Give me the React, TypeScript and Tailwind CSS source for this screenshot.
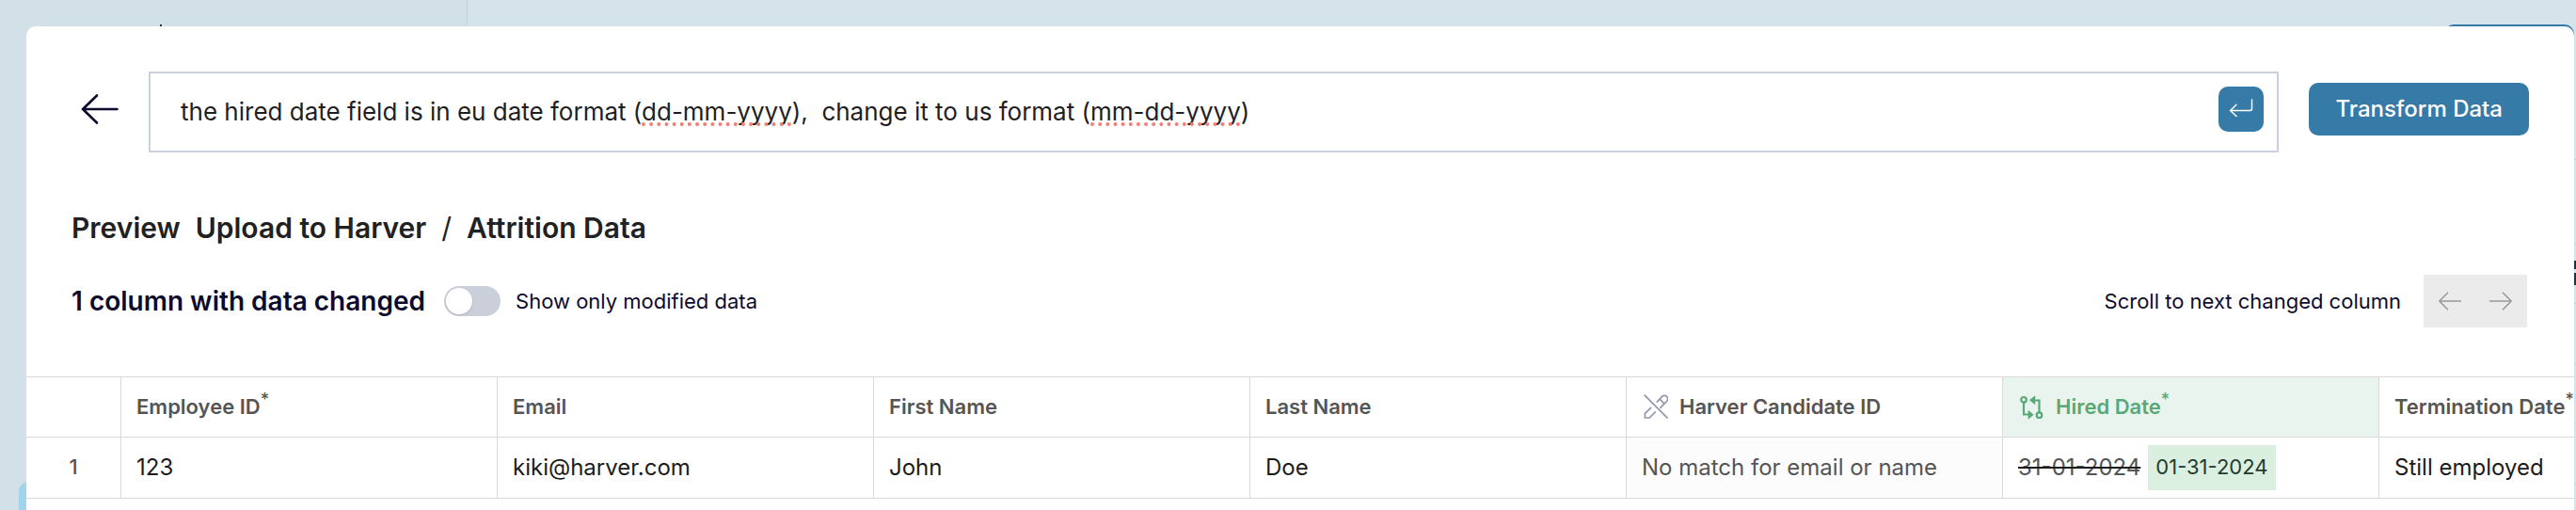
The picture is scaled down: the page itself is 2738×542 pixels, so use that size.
import type { ReactNode } from "react";

const columns: {
  title: string;
  required?: boolean;
  icon?: ReactNode;
  highlight?: boolean;
}[] = [
  { title: "Employee ID", required: true },
  { title: "Email" },
  { title: "First Name" },
  { title: "Last Name" },
  { title: "Harver Candidate ID", icon: <PencilOffIcon /> },
  { title: "Hired Date", required: true, icon: <CompareIcon />, highlight: true },
  { title: "Termination Date", required: true },
];

const prompt =
  "the hired date field is in eu date format (dd-mm-yyyy),\u00a0 change it to us format (mm-dd-yyyy)";

function PencilOffIcon() {
  return (
    <svg className="size-[26px] text-[#9398ac]" viewBox="0 0 26 26" fill="none" stroke="currentColor" strokeWidth="1.7">
      <path d="M0.7 0.7L25.5 25.5" />
      <path d="M13.8 8.6L19.6 2.4a3.5 3.5 0 0 1 5 5L17.4 14.8" />
      <path d="M17.2 5.2l4.6 4.6" />
      <path d="M8.2 13.8L1.4 20.4V25H6.2L12.8 18.4" />
    </svg>
  );
}

function CompareIcon() {
  return (
    <svg className="size-[26px]" viewBox="0 0 26 26" fill="none" stroke="currentColor" strokeWidth="2.2">
      <circle cx="4" cy="4.8" r="2.8" />
      <path d="M4 7.8V20.5h5" />
      <path d="M8.6 15.8v10l6-5z" fill="currentColor" stroke="none" />
      <circle cx="20.5" cy="21.2" r="2.8" />
      <path d="M20.5 18V5.5h-5" />
      <path d="M16.2 0.2v10l-6.2-5z" fill="currentColor" stroke="none" />
    </svg>
  );
}

function ArrowIcon({ right = false }: { right?: boolean }) {
  return (
    <svg className="h-5 w-6" viewBox="0 0 24 20" fill="none" stroke="currentColor" strokeWidth="1.6">
      {right ? (
        <path d="M0 10h23M14 0.8L23.2 10L14 19.2" />
      ) : (
        <path d="M24 10H1M10 0.8L0.8 10L10 19.2" />
      )}
    </svg>
  );
}

/* Upload page that stays visible around the edges of the modal */
function Backdrop() {
  return (
    <div className="absolute inset-0 flex overflow-hidden bg-[#d5e3ea]" aria-hidden="true">
      <div className="relative w-[497px] shrink-0 border-r border-[#c3d2dc] bg-[#d2e1e8]">
        <div className="absolute left-[170px] top-[26px] h-2 w-0.5 bg-[#22333b]" />
        <div className="absolute left-5 top-[512px] h-16 w-40 rounded-[10px] bg-[#a0d4ec]" />
      </div>
      <div className="relative flex-1">
        <div className="absolute right-0.5 top-[26px] h-14 w-[138px] rounded-[10px] bg-[#367ba7]" />
        <div className="pt-[169px]">
          <div className="h-[26px] border-t border-[#c3d2dc]" />
          {[0, 1, 2, 3, 4, 5].map((row) => (
            <div key={row} className="h-16 border-b border-[#c3d2dc]" />
          ))}
        </div>
        <div className="absolute right-0 top-[277px] h-[9px] w-1 bg-[#22333b]" />
        <div className="absolute right-0 top-[290px] h-[13px] w-1 bg-[#22333b]" />
      </div>
    </div>
  );
}

function PromptField() {
  return (
    <div className="relative h-[86px] flex-1">
      <input
        type="text"
        aria-label="Transformation prompt"
        defaultValue={prompt}
        spellCheck={false}
        className="h-full w-full border-2 border-[#cbd0de] bg-white pb-0.5 pl-8 pr-20 text-[26px] text-[#1f1f1f] outline-none"
      />
      {/* spelling marks */}
      <div
        aria-hidden="true"
        className="pointer-events-none absolute inset-0 flex items-center overflow-hidden whitespace-pre border-2 border-transparent pb-0.5 pl-8 pr-20 text-[26px] text-transparent"
      >
        <span>
          {prompt.split(/(dd-mm-yyyy|mm-dd-yyyy)/).map((part, i) =>
            i % 2 ? (
              <span
                key={i}
                className="underline decoration-[#f47c70] decoration-dotted decoration-4 underline-offset-3 [text-decoration-skip-ink:none]"
              >
                {part}
              </span>
            ) : (
              part
            )
          )}
        </span>
      </div>
      <button
        type="button"
        aria-label="Submit prompt"
        className="absolute right-4 top-4 size-12 rounded-[10px] bg-[#367ba7] text-white"
      >
        <svg className="size-12" viewBox="0 0 48 48" fill="none" stroke="currentColor" strokeWidth="1.5" strokeLinecap="round">
          <path d="M35.5 14v9.5q0 2-2 2H12.8M19 19.2l-6.4 6.3L19 31.5" />
        </svg>
      </button>
    </div>
  );
}

export default function App() {
  return (
    <div className="relative flex min-h-screen flex-col overflow-hidden pl-7 pr-0.5 pt-7 font-[Inter,sans-serif]">
      <Backdrop />

      <main className="relative flex-1 overflow-hidden rounded-t-[10px] bg-white pt-12">
        <div className="flex items-center gap-8 px-12">
          <button type="button" aria-label="Back" className="mb-1.5 pl-2.5 text-[#0d0b2d]">
            <svg className="h-8 w-10" viewBox="0 0 40 32" fill="none" stroke="currentColor" strokeWidth="2.6" strokeLinecap="round" strokeLinejoin="round">
              <path d="M38.5 16H2M17 1.5L2 16L17 30.5" />
            </svg>
          </button>
          <PromptField />
          <button
            type="button"
            className="mb-1.5 h-14 rounded-[10px] bg-[#367ba7] px-7 text-2xl font-medium text-white"
          >
            Transform Data
          </button>
        </div>

        <h1 className="mt-[62px] flex gap-4 px-12 text-[30px] leading-9 font-semibold text-[#212121]">
          <span>Preview</span>
          <span>Upload to Harver</span>
          <span className="font-normal">/</span>
          <span>Attrition Data</span>
        </h1>

        <div className="mt-8 flex h-14 items-center px-12 text-[22px] text-[#0d0b2d]">
          <h2 className="text-[28px] font-semibold">1 column with data changed</h2>
          <label className="ml-5 flex items-center gap-4">
            <input
              type="checkbox"
              role="switch"
              className="flex h-8 w-15 appearance-none items-center rounded-full bg-[#cbcfda] px-0.5 before:size-7 before:rounded-full before:bg-white before:shadow-sm checked:justify-end checked:bg-[#367ba7]"
            />
            Show only modified data
          </label>
          <div className="ml-auto mr-0.5 flex items-center gap-6">
            <span>Scroll to next changed column</span>
            <div className="flex h-14 gap-[30px] bg-[#ebebeb] px-4 text-[#999999]">
              <button type="button" aria-label="Previous changed column">
                <ArrowIcon />
              </button>
              <button type="button" aria-label="Next changed column">
                <ArrowIcon right />
              </button>
            </div>
          </div>
        </div>

        <div className="mt-13 overflow-hidden">
          <table className="w-max border-separate border-spacing-0 text-left text-2xl text-[#1c1c1c] [&_td]:h-[65px] [&_td]:border-b [&_td]:border-[#d9d9d9] [&_td+td]:border-l [&_td+td]:px-4">
            <thead>
              <tr className="text-[22px] text-[#555555]">
                <td className="w-[100px] min-w-[100px] border-t" />
                {columns.map((col) => (
                  <th
                    key={col.title}
                    scope="col"
                    className={`h-[65px] w-[400px] min-w-[400px] border-y border-l border-[#d9d9d9] px-4 font-semibold ${
                      col.highlight ? "bg-[#eaf4ef] text-[#58a878]" : ""
                    }`}
                  >
                    <span className={`flex items-center gap-3 ${col.icon ? "pl-0.5" : ""}`}>
                      {col.icon}
                      <span>
                        {col.title}
                        {col.required && <sup className="text-lg font-medium">*</sup>}
                      </span>
                    </span>
                  </th>
                ))}
              </tr>
            </thead>
            <tbody>
              <tr>
                <td className="text-center text-[22px] font-medium text-[#555555]">1</td>
                <td>123</td>
                <td>kiki@harver.com</td>
                <td>John</td>
                <td>Doe</td>
                <td className="bg-[#fcfcfc] text-[#555555]">No match for email or name</td>
                <td>
                  <div className="flex items-center gap-2">
                    <del className="text-[#555555] decoration-[#1c1c1c] decoration-2">31-01-2024</del>
                    <ins className="flex h-12 items-center bg-[#dbefe1] px-2 text-[22px] text-[#233b2f] no-underline">
                      01-31-2024
                    </ins>
                  </div>
                </td>
                <td>Still employed</td>
              </tr>
            </tbody>
          </table>
        </div>
      </main>
    </div>
  );
}
